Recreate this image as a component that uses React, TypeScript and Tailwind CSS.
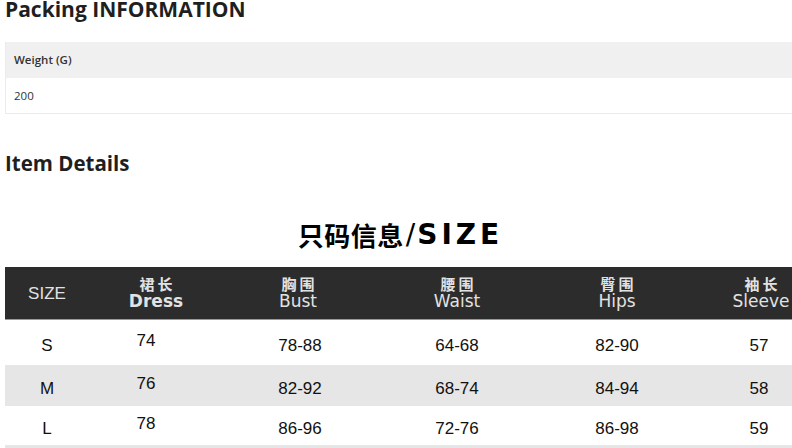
import React from "react";

const cols = [84, 134, 150, 168, 152, 136];

const headers: { zh?: string; en: string; bold?: boolean }[] = [
  { en: "SIZE" },
  { zh: "裙长", en: "Dress", bold: true },
  { zh: "胸围", en: "Bust" },
  { zh: "腰围", en: "Waist" },
  { zh: "臀围", en: "Hips" },
  { zh: "袖长", en: "Sleeve" },
];

const rows = [
  { h: 45, bg: "bg-white", v: ["S", "74", "78-88", "64-68", "82-90", "57"] },
  { h: 41, bg: "bg-[#e6e6e6]", v: ["M", "76", "82-92", "68-74", "84-94", "58"] },
  { h: 39, bg: "bg-white", v: ["L", "78", "86-96", "72-76", "86-98", "59"] },
  { h: 40, bg: "bg-[#e6e6e6]", v: ["", "", "", "", "", ""] },
];

export default function App() {
  const grid = { gridTemplateColumns: cols.map((c) => `${c}px`).join(" ") };
  return (
    <div className="w-[792px] h-[448px] overflow-hidden bg-white pl-[5px] text-[#222]" style={{ fontFamily: '"Open Sans", "Noto Sans", sans-serif' }}>
      <h2 className="text-[21px] font-bold leading-[22px] -mt-[2px] text-[#1f1f1f]">Packing INFORMATION</h2>
      <div className="mt-[22px] w-[800px] border border-[#ebebeb] border-t-0">
        <div className="h-[36px] bg-[#f0f0f0] flex items-center pl-[8px] text-[11.5px] font-semibold text-[#333]">Weight (G)</div>
        <div className="h-[35px] bg-white flex items-center pl-[8px] text-[11.5px] text-[#333]">200</div>
      </div>
      <h2 className="mt-[37px] text-[20.5px] font-bold leading-[24px] text-[#1f1f1f]">Item Details</h2>
      <div className="w-[787px] flex justify-center mt-[41px] h-[37px] items-center">
        <span className="text-[26px] font-bold text-black leading-none tracking-[0.5px]" style={{ fontFamily: '"Noto Sans CJK SC", sans-serif' }}>只码信息</span>
        <span className="text-[28px] text-black leading-none mx-[2px]" style={{ fontFamily: '"DejaVu Sans", sans-serif' }}>/</span>
        <span className="text-[28px] font-bold text-black leading-none tracking-[4px] -mr-[4px]" style={{ fontFamily: '"DejaVu Sans", sans-serif' }}>SIZE</span>
      </div>
      <div className="mt-[14px] w-[824px]" style={{ fontFamily: '"Liberation Sans", Arial, sans-serif' }}>
        <div className="grid h-[53px] bg-[#2c2c2c] border-b border-[#9a9a9a]" style={grid}>
          {headers.map((h, i) => (
            <div key={i} className="flex flex-col items-center justify-center text-[#e2e2e2]">
              {h.zh ? (
                <>
                  <span className="text-[15px] leading-[16px] font-bold tracking-[3px] -mr-[3px]" style={{ fontFamily: '"Noto Sans CJK SC", sans-serif' }}>{h.zh}</span>
                  <span className={`text-[17px] leading-[19px] ${h.bold ? "font-bold" : ""}`} style={{ fontFamily: '"DejaVu Sans", sans-serif' }}>{h.en}</span>
                </>
              ) : (
                <span className="text-[17px] pt-[2px]">{h.en}</span>
              )}
            </div>
          ))}
        </div>
        {rows.map((r, ri) => (
          <div key={ri} className={`grid ${r.bg}`} style={{ ...grid, height: r.h }}>
            {r.v.map((v, i) => (
              <div key={i} className={`flex justify-center items-center text-[17px] text-[#111] ${i === 1 ? "pr-[20px] pb-[4px]" : "pt-[6px]"} ${i === 2 ? "pl-[4px]" : ""} ${i === 5 ? "pr-[4px]" : ""}`}>
                {v}
              </div>
            ))}
          </div>
        ))}
      </div>
    </div>
  );
}
